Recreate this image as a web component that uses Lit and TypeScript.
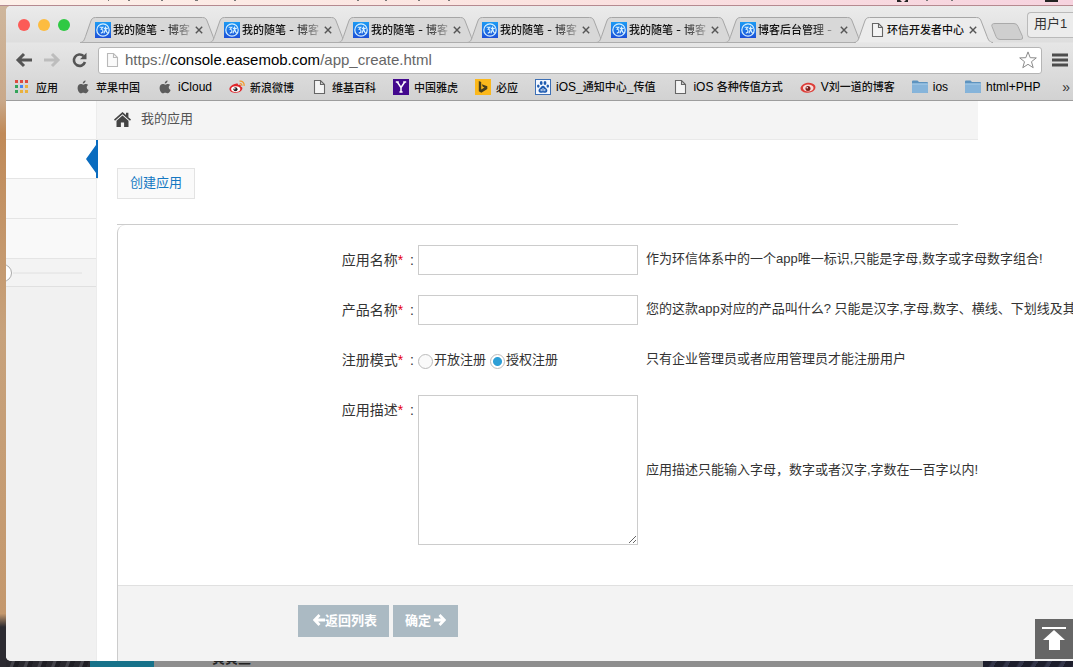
import { LitElement, html, css, svg } from "lit";
import { customElement, state } from "lit/decorators.js";

const blogIcon = html`<svg class="fav" viewBox="0 0 16 16" aria-hidden="true">
  <defs><linearGradient id="bg" x1="0" y1="0" x2="0" y2="1"><stop offset="0" stop-color="#1c9bf4"/><stop offset="1" stop-color="#1c4fd8"/></linearGradient></defs>
  <rect width="16" height="16" fill="url(#bg)"/>
  <circle cx="8" cy="8" r="6.200" fill="none" stroke="#d8f1ff" stroke-width="1.200"/>
  <path d="M4.600 5.200h3.200L6.200 7.200c2.600.3 2.400 3.600-.4 3.900M8.800 6.400h4M10.600 4.400c0 3-.4 5-1.800 7M10.800 7c.2 2 .8 3.400 1.800 4.200" fill="none" stroke="#d8f1ff" stroke-width="1.100"/>
</svg>`;

const pageIcon = html`<svg class="fav" viewBox="0 0 16 16" aria-hidden="true">
  <path d="M3.500 1.500h6l4 4v9h-10zM9.500 1.500v4h4" fill="#f4f4f4" stroke="#666" stroke-width="1.1"/>
</svg>`;

const appleIcon = html`<svg class="fav" viewBox="0 0 16 16" aria-hidden="true">
  <path d="M10.600 1.600c.1 1.600-1.300 3-2.800 2.900C7.600 3 9 1.700 10.600 1.600zM13.100 6c-2 1.200-1.700 4 .5 4.900-.5 1.500-1.700 3.400-2.900 3.400-1 0-1.300-.6-2.400-.6s-1.500.6-2.400.6C4.100 14.300 2.600 11.400 2.600 9c0-2.400 1.500-3.900 3.200-3.900 1.100 0 1.800.6 2.600.6.700 0 1.500-.7 2.800-.7.800 0 1.500.4 1.900 1z" fill="#5c5c5c"/>
</svg>`;

const weiboIcon = html`<svg class="fav" viewBox="0 0 16 16" aria-hidden="true">
  <path d="M6.800 4.800c1.300-.6 2.400-.3 2.200 1.100 1.900-.6 3.200.1 2.700 1.500 1.600.5 2 1.500 1.500 2.800-.8 2.300-3.700 3.600-6.700 3.600C3.200 13.800.4 12.400.4 10 .4 8 3.600 5.200 6.800 4.800z" fill="#e0262b"/>
  <ellipse cx="6.700" cy="10.100" rx="4.600" ry="2.900" fill="#fff"/>
  <circle cx="6.500" cy="10.300" r="2" fill="#222"/><circle cx="5.800" cy="9.800" r=".7" fill="#fff"/>
  <path d="M10.800 4.600c1.500-.2 2.300.8 1.900 2.200M10.500 2.200c2.900-.6 5.200 1.700 4.500 4.700" fill="none" stroke="#f29a2e" stroke-width="1.300"/>
</svg>`;

const eyeIcon = html`<svg class="fav" viewBox="0 0 16 16" aria-hidden="true">
  <path d="M.6 8.500C2.500 3.500 11.500 2 15 6.500c1.800 4-2.500 7.300-7 7.300S0 11.800.6 8.500z" fill="#dd3d38"/>
  <ellipse cx="8.200" cy="9" rx="5.300" ry="3.400" fill="#f7dcd9"/>
  <circle cx="8" cy="9.400" r="2.500" fill="#7c1f1c"/><circle cx="7.200" cy="8.700" r=".8" fill="#fff"/>
</svg>`;

const yahooIcon = html`<svg class="fav" viewBox="0 0 16 16" aria-hidden="true">
  <rect width="16" height="16" fill="#43088e"/>
  <path d="M4.300 3l3.700 5.500V13M11.700 3L8 8.500M2.800 3h3M10.200 3h3M6.400 13h3.200" fill="none" stroke="#fff" stroke-width="1.500"/>
</svg>`;

const bingIcon = html`<svg class="fav" viewBox="0 0 16 16" aria-hidden="true">
  <rect width="16" height="16" fill="#fbb81b"/>
  <path d="M3.800 2l2.400.9v7.500l3.300-1.900-1.700-.8-1-2.500 5.500 2.100v2.700l-6 3.700-2.500-1.500z" fill="#473d1d"/>
</svg>`;

const baiduIcon = html`<svg class="fav" viewBox="0 0 16 16" aria-hidden="true">
  <rect x=".5" y=".5" width="15" height="15" fill="#f4f8ff" stroke="#3d6fb5"/>
  <g fill="#1e5bb0"><ellipse cx="6.200" cy="4" rx="1.400" ry="1.900"/><ellipse cx="10" cy="4" rx="1.400" ry="1.900"/><ellipse cx="3.300" cy="7.100" rx="1.300" ry="1.700"/><ellipse cx="12.800" cy="7.100" rx="1.300" ry="1.700"/>
  <path d="M8 6.800c1.500 0 2.200 1.700 3.400 2.800 1.700 1.600 1 4-1 4.100-1 0-1.500-.3-2.400-.3s-1.500.3-2.500.3c-2-.1-2.700-2.500-1-4.100C5.800 8.500 6.500 6.800 8 6.800z"/></g>
  <path d="M6.200 10v2.200M8 9v3.200M9.800 10v2.200" stroke="#f4f8ff" stroke-width=".9"/>
</svg>`;

const folderIcon = html`<svg class="fav" viewBox="0 0 16 16" aria-hidden="true">
  <path d="M0 2.500q0-1 1-1h4.500l1.500 1.500h8q1 0 1 1V13q0 1-1 1H1q-1 0-1-1z" fill="#5d93bf"/>
  <rect y="4.500" width="16" height="9.500" rx="1" fill="#86b4da"/>
  <path d="M0 5h16" stroke="#a9cde9"/>
</svg>`;

const appsIcon = html`<svg class="fav" viewBox="0 0 16 16" aria-hidden="true">
  ${["#dd4b3e", "#dd4b3e", "#dd4b3e", "#33a45a", "#4285f4", "#eab13c", "#33a45a", "#eab13c", "#eab13c"].map(
    (c, i) => svg`<rect x=${(i % 3) * 5} y=${1 + Math.floor(i / 3) * 5} width="3" height="3" fill=${c}/>`
  )}
</svg>`;

const tabs = [
  { title: "我的随笔 - 博客", icon: blogIcon },
  { title: "我的随笔 - 博客", icon: blogIcon },
  { title: "我的随笔 - 博客", icon: blogIcon },
  { title: "我的随笔 - 博客", icon: blogIcon },
  { title: "我的随笔 - 博客", icon: blogIcon },
  { title: "博客后台管理 -", icon: blogIcon },
  { title: "环信开发者中心", icon: pageIcon, active: true },
];

const bookmarks = [
  { label: "应用", icon: appsIcon },
  { label: "苹果中国", icon: appleIcon },
  { label: "iCloud", icon: appleIcon },
  { label: "新浪微博", icon: weiboIcon },
  { label: "维基百科", icon: pageIcon },
  { label: "中国雅虎", icon: yahooIcon },
  { label: "必应", icon: bingIcon },
  { label: "iOS_通知中心_传值", icon: baiduIcon },
  { label: "iOS 各种传值方式", icon: pageIcon },
  { label: "V刘一道的博客", icon: eyeIcon },
  { label: "ios", icon: folderIcon },
  { label: "html+PHP", icon: folderIcon },
];

// Latin runs are set one size larger than the Chinese characters around them.
const mixed = (text: string) =>
  text.split(/([\x20-\x7e]+)/).filter(Boolean).map((part) =>
    /^[\x20-\x7e]/.test(part) ? html`<span class="latin">${part}</span>` : part
  );

@customElement("browser-chrome")
class BrowserChrome extends LitElement {
  static styles = css`
    :host { display: block; background: linear-gradient(#ebebeb, #dedede 36px, #e6e6e6 37px, #d2d2d2); border-bottom: 1px solid #9d9d9d; }
    button { border: 0; padding: 0; background: none; font: inherit; color: inherit; }
    svg { display: block; flex: none; }
    .fav { width: 16px; height: 16px; }
    .strip { display: flex; height: 37px; padding-left: 12px; box-sizing: border-box; }
    .lights { display: flex; gap: 8px; padding-top: 13px; width: 62px; flex: none; }
    .light { width: 12px; height: 12px; border-radius: 50%; }
    .red { background: #fc5b57; } .amber { background: #fdbc40; } .green { background: #2fc943; }
    .tabs { display: flex; align-items: flex-end; min-width: 0; }
    .tab { display: grid; width: 139px; height: 26px; margin-right: -10px; flex: none; }
    .tab > * { grid-area: 1 / 1; }
    .active { z-index: 1; }
    .shape { width: 139px; height: 26px; }
    .inner { display: flex; align-items: center; gap: 2px; padding: 0 16px 1px 15px; font: 500 11px/16px Inter, "Noto Sans CJK SC", sans-serif; color: #111; min-width: 0; }
    .title { flex: 1; white-space: pre; mask-image: linear-gradient(to right, #000 65%, transparent 105%); }
    .active .title { mask-image: none; }
    .newtab { margin: 0 4px 3px 8px; }
    .user { margin-left: auto; width: 46px; height: 26px; margin-top: 6px; border: 1px solid #bababa; border-right: 0; border-radius: 4px 0 0 4px; background: #ececec; font-size: 13px; line-height: 20px; padding-bottom: 2px; color: #333; flex: none; }
    .bar { display: flex; align-items: center; height: 32px; padding: 2px 5px 0 9px; gap: 10px; box-sizing: border-box; }
    .address { display: flex; align-items: center; flex: 1; height: 25px; padding: 0 4px 0 5px; background: #fff; border: 1px solid #b5b5b5; border-radius: 3px; gap: 5px; min-width: 0; }
    .address .fav { opacity: .45; }
    .url { flex: 1; font-size: 15px; line-height: 20px; color: #666; white-space: nowrap; }
    .host { color: #000; }
    .marks { display: flex; align-items: center; height: 25px; padding: 0 3px 2px 9px; gap: 17px; box-sizing: border-box; }
    .mark { display: flex; align-items: center; gap: 5px; color: #111; text-decoration: none; white-space: nowrap; font: 500 11px/16px "Noto Sans CJK SC", sans-serif; }
    .latin { font: 12px/16px "Liberation Sans", sans-serif; color: #000; }
    .more { margin-left: auto; font-size: 14px; line-height: 16px; }
  `;

  render() {
    return html`
      <div class="strip">
        <div class="lights"><i class="light red"></i><i class="light amber"></i><i class="light green"></i></div>
        <div class="tabs">
          ${tabs.map(
            (t) => html`<div class="tab ${t.active ? "active" : ""}">
              <svg class="shape" viewBox="0 0 139 26" aria-hidden="true">
                <path d="M0 25.500C4 25.500 4.500 22 6 18L10.500 5C11.500 2 12.500.5 15.500.5H122.500C125.500.5 126.500 2 127.500 5L132.500 18C134 22 135 25.500 139 25.500" fill=${t.active ? "#ececec" : "#d8d8d8"} stroke="#a6a6a6"/>
                ${t.active ? svg`<path d="M2 25.500H137" stroke="#e8e8e8"/>` : svg`<path d="M0 25.500H139" stroke="#adadad"/>`}
              </svg>
              <div class="inner">
                ${t.icon}<span class="title">${t.title}</span>
                <button aria-label="关闭标签页"><svg width="8" height="8" viewBox="0 0 8 8"><path d="M.8.8l6.400 6.400M7.200.8L.8 7.200" stroke="#555" stroke-width="1.400"/></svg></button>
              </div>
            </div>`
          )}
          <button class="newtab" aria-label="新标签页"><svg width="33" height="17" viewBox="0 0 33 17"><path d="M4 .5H23q3 0 4 3l4.500 10q1 3-2 3H9q-3 0-4-3L1 3.500Q0 .5 4 .5z" fill="#cfcfcf" stroke="#aaa"/></svg></button>
        </div>
        <button class="user">用户1</button>
      </div>
      <div class="bar">
        <button aria-label="后退"><svg width="18" height="16" viewBox="0 0 18 16"><path d="M9 2L3 8l6 6M3 8h14" fill="none" stroke="#555" stroke-width="3"/></svg></button>
        <button aria-label="前进"><svg width="18" height="16" viewBox="0 0 18 16"><path d="M9 2l6 6-6 6M15 8H1" fill="none" stroke="#bdbdbd" stroke-width="3"/></svg></button>
        <button aria-label="重新加载"><svg width="17" height="16" viewBox="0 0 17 16"><path d="M12.500 4A5.700 5.700 0 1 0 14 10" fill="none" stroke="#555" stroke-width="2.600"/><path d="M15.500.8v6.400H9z" fill="#555"/></svg></button>
        <div class="address">
          ${pageIcon}<span class="url">https://<span class="host">console.easemob.com</span>/app_create.html</span>
          <button aria-label="收藏"><svg width="18" height="18" viewBox="0 0 18 18"><path d="M9 .9l2.200 5.800 6.100.2-4.800 3.800 1.700 6L9 13.300l-5.200 3.400 1.700-6L.7 6.900l6.100-.2z" fill="#fff" stroke="#8a8a8a"/></svg></button>
        </div>
        <button aria-label="菜单"><svg width="16" height="14" viewBox="0 0 16 14"><path d="M0 2h16M0 7h16M0 12h16" stroke="#4c4c4c" stroke-width="3"/></svg></button>
      </div>
      <nav class="marks">
        ${bookmarks.map((b) => html`<a class="mark" href="#">${b.icon}<span>${mixed(b.label)}</span></a>`)}
        <button class="more" aria-label="更多书签">»</button>
      </nav>
    `;
  }
}

@customElement("app-root")
class AppRoot extends LitElement {
  @state() private mode = "auth";

  static styles = css`
    :host { display: flex; flex-direction: column; min-height: 100vh; overflow: hidden; font-family: "Liberation Sans", "Noto Sans CJK SC", sans-serif; color: #333; background: linear-gradient(#cfb79d, #c9a98a 15%, #c08a58 20%, #c7a27c 50%, #c4986d 92%, #2c2b31 94%); }
    button { border: 0; padding: 0; font: inherit; }
    svg { display: block; flex: none; }
    .menubar { height: 5px; background: linear-gradient(to right, #fdf0e9, #fbe3e0 50%, #f6d3df); border-bottom: 1px solid #b58a90; }
    .menubar svg { width: 100%; height: 5px; }
    .window { position: relative; display: flex; flex-direction: column; flex: 1; margin-left: 6px; border-radius: 5px 0 0 5px; overflow: hidden; background: #fff; }
    .body { display: flex; flex: 1; }
    .side { width: 90px; flex: none; background: #f1f1f1; border-right: 1px solid #ececec; }
    .item { height: 39px; border-bottom: 1px solid #e5e5e5; background: #f9f9f9; }
    .item.first { height: 38px; background: #fbfbfb; }
    .item.current { display: flex; justify-content: flex-end; height: 38px; background: #fff; margin-right: -2px; }
    .collapse { display: flex; align-items: center; height: 27px; border-bottom: 1px solid #e0e0e0; background: #f3f3f3; }
    .main { flex: 1; min-width: 0; display: flex; flex-direction: column; }
    .crumb { display: flex; align-items: center; gap: 10px; height: 39px; margin-right: 95px; padding: 0 0 2px 17px; background: #f4f4f4; border-bottom: 1px solid #e9e9e9; font-size: 13px; line-height: 20px; color: #555; box-sizing: border-box; }
    .create { align-self: flex-start; margin: 28px 0 0 20px; padding: 0 12px 4px; height: 31px; border: 1px solid #e3e3e3; background: #fafafa; color: #1578c2; font-size: 13px; }
    .rule { margin: 25px 115px 0 20px; border-top: 1px solid #ccc; }
    .panel { display: flex; flex-direction: column; flex: 1; margin-left: 20px; border-left: 1px solid #ccc; border-top-left-radius: 8px; overflow: hidden; }
    .fields { display: grid; row-gap: 20px; padding: 20px 0 40px; }
    .row { display: grid; grid-template-columns: 300px 220px max-content; column-gap: 0; min-height: 30px; }
    .label { display: flex; justify-content: flex-end; padding-right: 4px; font-size: 14px; line-height: 30px; height: 30px; }
    .star { color: #e60012; padding-right: 7px; }
    .box { box-sizing: border-box; width: 220px; height: 30px; margin: 0; padding: 4px 6px; border: 1px solid #ccc; border-radius: 0; background: #fff; font: 13px/20px "Liberation Sans", "Noto Sans CJK SC", sans-serif; outline: none; }
    .area { height: 150px; resize: both; }
    .hint { align-self: center; padding-left: 8px; font-size: 13px; line-height: 28px; white-space: nowrap; }
    .short .hint { align-self: start; }
    .choices { display: flex; align-items: center; gap: 4px; font-size: 13px; line-height: 30px; }
    .choice { display: flex; align-items: center; gap: 1px; }
    .radio { appearance: none; width: 15px; height: 15px; margin: 2px 0 0; border: 1px solid #bbb; border-radius: 50%; background: #fafafa; }
    .radio:checked { background: radial-gradient(circle, #2e9fd6 0 4px, #fff 5px); }
    .foot { flex: 1; display: flex; align-items: flex-start; gap: 4px; padding: 19px 180px 24px; background: #f3f3f3; border-top: 1px solid #e0e0e0; }
    .action { display: flex; align-items: center; height: 32px; padding: 0 12px 3px; background: #abbac3; color: #fff; font-size: 13px; font-weight: 700; }
    .back { padding-left: 15px; }
    .next { gap: 3px; }
    .top { position: absolute; right: 0; bottom: 2px; display: grid; place-items: center; width: 38px; height: 40px; background: #666; }
    .dock { display: flex; height: 6px; margin-left: 6px; background: #8e8e8e; overflow: hidden; }
    .rock { width: 84px; background: repeating-linear-gradient(110deg, #29282e 0 5px, #45444b 6px 8px, #1f1e24 9px 13px); }
    .teal { width: 64px; background: #17728a; }
    .peek { flex: 1; display: flex; align-items: flex-end; padding-left: 58px; font-size: 13px; font-weight: 700; line-height: 16px; color: #222; }
    .night { width: 90px; background: repeating-linear-gradient(120deg, #1d1e2c 0 7px, #34364a 9px 12px); }
  `;

  private label(text: string, id: string) {
    return html`<label class="label" for=${id}>${text}<span class="star">*</span>:</label>`;
  }

  render() {
    return html`
      <div class="menubar"><svg viewBox="0 0 1073 5" preserveAspectRatio="none" aria-hidden="true">
        <path d="M897 0h3l2 2h2l2-2h2v2h-11zM1045 0h13v2h-13z" fill="#222"/>
        <path d="M108 0h1M128 0h2M161 0h2M195 0h3M234 0h2M357 0h2M385 0h2M418 0h2M448 0h2M926 0h2M951 0h2" stroke="#777" stroke-width="2"/>
      </svg></div>
      <div class="window">
        <browser-chrome></browser-chrome>
        <div class="body">
          <aside class="side">
            <div class="item first"></div>
            <div class="item current"><svg width="12" height="38" viewBox="0 0 12 38" aria-hidden="true"><path d="M10 0h2v38h-2v-5L0 19 10 5z" fill="#0a6cbf"/></svg></div>
            <div class="item"></div>
            <div class="item"></div>
            <div class="collapse"><svg width="76" height="18" viewBox="0 0 76 18" aria-hidden="true"><path d="M7 9h69" stroke="#e0e0e0"/><circle cx="-3" cy="9" r="8.500" fill="#fff" stroke="#aaa"/></svg></div>
          </aside>
          <main class="main">
            <div class="crumb">
              <svg width="17" height="15" viewBox="0 0 17 15" aria-hidden="true"><path d="M8.500 0l3.500 3.100V.8h2.400v4.500L17 7.600l-1 1.100L8.500 2.200 1 8.700 0 7.600z" fill="#444"/><path d="M8.500 3.600l6 5.200V15h-4.400v-4.400H6.900V15H2.500V8.800z" fill="#444"/></svg>
              我的应用
            </div>
            <button class="create">创建应用</button>
            <div class="rule"></div>
            <form class="panel" @submit=${(e: Event) => e.preventDefault()}>
              <div class="fields">
                <div class="row short">
                  ${this.label("应用名称", "app-name")}
                  <input class="box" id="app-name" type="text" />
                  <span class="hint">作为环信体系中的一个app唯一标识,只能是字母,数字或字母数字组合!</span>
                </div>
                <div class="row short">
                  ${this.label("产品名称", "product-name")}
                  <input class="box" id="product-name" type="text" />
                  <span class="hint">您的这款app对应的产品叫什么? 只能是汉字,字母,数字、横线、下划线及其</span>
                </div>
                <div class="row short">
                  ${this.label("注册模式", "mode-open")}
                  <div class="choices">
                    <label class="choice"><input class="radio" id="mode-open" type="radio" name="mode" .checked=${this.mode === "open"} @change=${() => (this.mode = "open")} />开放注册</label>
                    <label class="choice"><input class="radio" type="radio" name="mode" .checked=${this.mode === "auth"} @change=${() => (this.mode = "auth")} />授权注册</label>
                  </div>
                  <span class="hint">只有企业管理员或者应用管理员才能注册用户</span>
                </div>
                <div class="row">
                  ${this.label("应用描述", "app-desc")}
                  <textarea class="box area" id="app-desc"></textarea>
                  <span class="hint">应用描述只能输入字母，数字或者汉字,字数在一百字以内!</span>
                </div>
              </div>
              <div class="foot">
                <button class="action back" type="button"><svg width="12" height="12" viewBox="0 0 12 12" aria-hidden="true"><path d="M6.500 1L1.700 6l4.800 5M2 6h10" fill="none" stroke="#fff" stroke-width="2.800"/></svg>返回列表</button>
                <button class="action next" type="submit">确定<svg width="12" height="12" viewBox="0 0 12 12" aria-hidden="true"><path d="M5.500 1l4.800 5-4.800 5M10 6H0" fill="none" stroke="#fff" stroke-width="2.800"/></svg></button>
              </div>
            </form>
          </main>
        </div>
        <button class="top" aria-label="返回顶部"><svg width="24" height="24" viewBox="0 0 24 24"><path d="M0 0h24v2H0zM12 3l11 10h-5v10H7V13H1z" fill="#fff"/></svg></button>
      </div>
      <div class="dock"><div class="rock"></div><div class="teal"></div><div class="peek">黄黄兰</div><div class="night"></div></div>
    `;
  }
}
